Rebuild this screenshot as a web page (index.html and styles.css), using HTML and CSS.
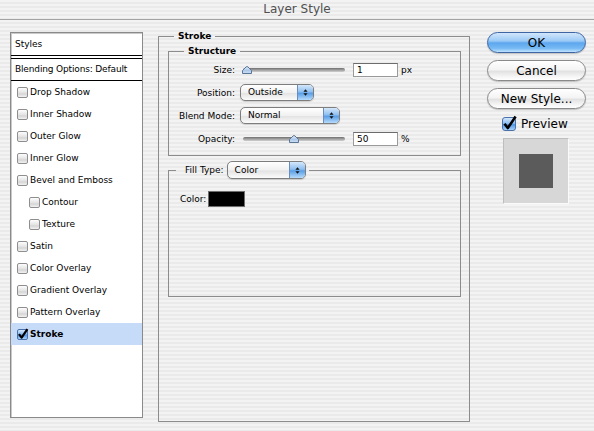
FILE: index.html
```html
<!DOCTYPE html>
<html lang="en">
<head>
<meta charset="utf-8">
<title>Layer Style</title>
<link rel="stylesheet" href="styles.css">
</head>
<body>
<div class="window">
  <header class="titlebar">Layer Style</header>

  <div class="content">
    <!-- Effect list -->
    <nav class="styles-list">
      <div class="list-head">Styles</div>
      <div class="list-sep"></div>
      <div class="list-blend">Blending Options: Default</div>
      <ul class="effects">
        <li class="effect"><span class="check"></span>Drop Shadow</li>
        <li class="effect"><span class="check"></span>Inner Shadow</li>
        <li class="effect"><span class="check"></span>Outer Glow</li>
        <li class="effect"><span class="check"></span>Inner Glow</li>
        <li class="effect"><span class="check"></span>Bevel and Emboss</li>
        <li class="effect sub"><span class="check"></span>Contour</li>
        <li class="effect sub"><span class="check"></span>Texture</li>
        <li class="effect"><span class="check"></span>Satin</li>
        <li class="effect"><span class="check"></span>Color Overlay</li>
        <li class="effect"><span class="check"></span>Gradient Overlay</li>
        <li class="effect"><span class="check"></span>Pattern Overlay</li>
        <li class="effect selected"><span class="check on"><svg viewBox="0 0 11 11"><path d="M2 5.2 L4.6 8.6 L10.4 0.2" fill="none" stroke="#000" stroke-width="2.2" stroke-linejoin="round"/></svg></span><b>Stroke</b></li>
      </ul>
    </nav>

    <!-- Stroke settings -->
    <fieldset class="group main-group">
      <legend>Stroke</legend>

      <fieldset class="group structure">
        <legend>Structure</legend>
        <div class="form-grid">
          <label>Size:</label>
          <div class="control">
            <div class="slider" style="--value:0"><div class="track"></div><span class="thumb"><svg viewBox="0 0 10 8"><path d="M0.5 7.5 V4.5 L4 1 Q5 0 6 1 L9.5 4.5 V7.5 Z" fill="url(#thumbFill)" stroke="#5b7597" stroke-width="1"/></svg></span></div>
            <span class="field">1</span><span class="unit">px</span>
          </div>

          <label>Position:</label>
          <div class="control">
            <div class="popup pos-popup"><span class="popup-text">Outside</span><span class="popup-arrows"><svg viewBox="0 0 6 10"><path d="M0.5 4 L3 1 L5.5 4 Z M0.5 6 L3 9 L5.5 6 Z" fill="#111"/></svg></span></div>
          </div>

          <label>Blend Mode:</label>
          <div class="control">
            <div class="popup blend-popup"><span class="popup-text">Normal</span><span class="popup-arrows"><svg viewBox="0 0 6 10"><path d="M0.5 4 L3 1 L5.5 4 Z M0.5 6 L3 9 L5.5 6 Z" fill="#111"/></svg></span></div>
          </div>

          <label>Opacity:</label>
          <div class="control">
            <div class="slider" style="--value:50"><div class="track"></div><span class="thumb"><svg viewBox="0 0 10 8"><path d="M0.5 7.5 V4.5 L4 1 Q5 0 6 1 L9.5 4.5 V7.5 Z" fill="url(#thumbFill)" stroke="#5b7597" stroke-width="1"/></svg></span></div>
            <span class="field">50</span><span class="unit">%</span>
          </div>
        </div>
      </fieldset>

      <fieldset class="group fill">
        <legend class="fill-legend"><span>Fill Type:</span><span class="popup fill-popup"><span class="popup-text">Color</span><span class="popup-arrows"><svg viewBox="0 0 6 10"><path d="M0.5 4 L3 1 L5.5 4 Z M0.5 6 L3 9 L5.5 6 Z" fill="#111"/></svg></span></span></legend>
        <div class="color-row"><span>Color:</span><span class="swatch"></span></div>
      </fieldset>
    </fieldset>

    <!-- Dialog buttons and preview -->
    <aside class="actions">
      <button class="btn default">OK</button>
      <button class="btn">Cancel</button>
      <button class="btn">New Style...</button>
      <div class="preview-toggle"><span class="check big on"><svg viewBox="0 0 14 14"><path d="M2.5 6.8 L5.8 11 L13.6 -0.5" fill="none" stroke="#000" stroke-width="2.6" stroke-linejoin="round"/></svg></span>Preview</div>
      <div class="preview-box"><div class="preview-swatch"></div></div>
    </aside>
  </div>
</div>

<svg class="defs" width="0" height="0" aria-hidden="true">
  <defs>
    <linearGradient id="thumbFill" x1="0" y1="0" x2="0" y2="1">
      <stop offset="0" stop-color="#e8f1fb"/>
      <stop offset="0.55" stop-color="#a9c6e8"/>
      <stop offset="1" stop-color="#cfe1f5"/>
    </linearGradient>
  </defs>
</svg>
</body>
</html>
```

FILE: styles.css
```css
* {
  box-sizing: border-box;
}

html,
body {
  margin: 0;
  padding: 0;
}

body {
  width: 594px;
  height: 431px;
  overflow: hidden;
  font-family: "DejaVu Sans", "Liberation Sans", sans-serif;
  font-size: 9px;
  color: #000;
  background: repeating-linear-gradient(to bottom, #f3f3f3 0 2px, #eaeaea 2px 4px);
}

.defs {
  position: absolute;
}

/* Window title */
.titlebar {
  height: 20px;
  border-bottom: 1px solid #a3a3a3;
  text-align: center;
  font-size: 12px;
  line-height: 18px;
  color: #505050;
}

.content {
  display: flex;
  align-items: flex-start;
  padding-left: 10px;
}

/* Effect list */
.styles-list {
  width: 133px;
  height: 386px;
  margin-top: 12px;
  background: #fff;
  border: 1px solid #8a8a8a;
  box-shadow: inset 1px 1px 0 #c9c9c9;
}

.list-head {
  height: 22px;
  line-height: 22px;
  padding-left: 4px;
}

.list-sep {
  height: 4px;
  border-top: 1px solid #000;
  border-bottom: 1px solid #000;
}

.list-blend {
  height: 22px;
  line-height: 21px;
  padding-left: 4px;
  border-bottom: 1px solid #000;
  letter-spacing: -0.15px;
}

.effects {
  list-style: none;
  margin: 0;
  padding: 0;
}

.effect {
  height: 22px;
  display: flex;
  align-items: center;
  gap: 2px;
  padding-left: 6px;
}

.effect.sub {
  padding-left: 18px;
}

.effect.selected {
  background: #c6dbf8;
}

.effect b {
  font-weight: bold;
}

/* Aqua checkbox */
.check {
  flex: none;
  width: 11px;
  height: 11px;
  border: 1px solid #8e8e8e;
  border-radius: 2px;
  background: linear-gradient(to bottom, #fdfdfd, #e2e2e2 55%, #d4d4d4 65%, #f2f2f2);
  position: relative;
}

.check.on {
  border-color: #4a72a8;
  background: linear-gradient(to bottom, #d3e6fb, #8dbdf0 45%, #4f96e2 55%, #a9d2fa);
}

.check svg {
  position: absolute;
  left: -1px;
  top: -1px;
  width: 11px;
  height: 11px;
  overflow: visible;
}

.check.big {
  width: 14px;
  height: 14px;
  border-radius: 3px;
}

.check.big svg {
  width: 14px;
  height: 14px;
}

/* Group boxes */
.group {
  margin: 0;
  border: 1px solid #8c8c8c;
  min-width: 0;
}

.group > legend {
  font-weight: bold;
  line-height: 12px;
  padding: 0 4px;
}

.main-group {
  width: 312px;
  margin-left: 15px;
  margin-top: 10px;
  padding: 3px 8px 124px 9px;
}

.main-group > legend {
  margin-left: 6px;
}

.structure {
  width: 293px;
  padding: 1px 0 5px 0;
}

.structure > legend {
  margin-left: 15px;
}

.form-grid {
  display: grid;
  grid-template-columns: 66px auto;
  column-gap: 5px;
  grid-auto-rows: 23px;
  align-items: center;
}

.form-grid label {
  text-align: right;
  white-space: nowrap;
}

.control {
  display: flex;
  align-items: center;
}

/* Slider */
.slider {
  position: relative;
  width: 108px;
  height: 12px;
  display: flex;
  align-items: center;
}

.track {
  flex: 1;
  margin: 0 3px;
  height: 4px;
  border-radius: 2px;
  background: linear-gradient(to bottom, #6f6f6f, #a9a9a9 60%, #d0d0d0);
}

.thumb {
  position: absolute;
  top: 2px;
  left: calc(2px + var(--value) * 0.94px);
  width: 10px;
  height: 8px;
}

.thumb svg {
  display: block;
  width: 10px;
  height: 8px;
}

.field {
  width: 45px;
  height: 14px;
  margin-left: 5px;
  padding-left: 3px;
  line-height: 13px;
  background: #fff;
  border: 1px solid #9a9a9a;
  border-top-color: #6c6c6c;
}

.unit {
  margin-left: 3px;
}

/* Popup menu */
.popup {
  display: flex;
  align-items: stretch;
  height: 17px;
  border: 1px solid #7d7d7d;
  border-radius: 5px;
  background: linear-gradient(to bottom, #ffffff, #f1f1f1 50%, #e3e3e3 55%, #fbfbfb);
  box-shadow: 0 1px 1px rgba(0, 0, 0, 0.15);
  overflow: hidden;
}

.popup-text {
  flex: 1;
  padding-left: 7px;
  line-height: 15px;
}

.popup-arrows {
  width: 16px;
  display: flex;
  align-items: center;
  justify-content: center;
  border-left: 1px solid #6a8cbf;
  background: linear-gradient(to bottom, #d5e7fb, #8fc0f0 45%, #5a9ee6 55%, #b6dbfb);
}

.popup-arrows svg {
  width: 5px;
  height: 9px;
}

.pos-popup {
  width: 74px;
}

.blend-popup {
  width: 100px;
}

.fill {
  width: 293px;
  margin-top: 5px;
  padding: 0 0 89px 0;
}

.group > .fill-legend {
  display: flex;
  align-items: center;
  gap: 3px;
  font-weight: normal;
  line-height: 18px;
  margin-left: 7px;
  padding: 0 3px 0 9px;
}

.fill-popup {
  width: 79px;
  height: 18px;
}

.fill-popup .popup-text {
  line-height: 16px;
}

.color-row {
  display: flex;
  align-items: center;
  gap: 2px;
  height: 16px;
  margin: 12px 0 0 11px;
}

.swatch {
  width: 37px;
  height: 16px;
  background: #000;
  border: 1px solid #6d6d6d;
}

/* Buttons */
.actions {
  width: 99px;
  margin: 12px 0 0 17px;
  display: flex;
  flex-direction: column;
}

.btn {
  height: 21px;
  margin: 0 0 7px 0;
  padding: 0;
  font-family: inherit;
  font-size: 12px;
  color: #000;
  border: 1px solid #8a8a8a;
  border-radius: 11px;
  background: linear-gradient(to bottom, #ffffff, #f4f4f4 45%, #e2e2e2 55%, #f7f7f7 85%, #ffffff);
  box-shadow: 0 1px 1px rgba(0, 0, 0, 0.2);
}

.btn.default {
  border-color: #3d66a3;
  background: linear-gradient(to bottom, #d2e6fc, #9bcaf6 42%, #5da7ee 52%, #76b9f4 80%, #bfe2ff);
}

.preview-toggle {
  display: flex;
  align-items: center;
  gap: 5px;
  height: 17px;
  margin-top: -1px;
  padding-left: 15px;
  font-size: 12px;
}

.preview-box {
  width: 66px;
  height: 66px;
  margin: 6px 0 0 16px;
  display: flex;
  align-items: center;
  justify-content: center;
  background: #d7d7d7;
  border: 1px solid #bdbdbd;
  border-right-color: #fafafa;
  border-bottom-color: #fafafa;
}

.preview-swatch {
  width: 34px;
  height: 34px;
  background: #5b5b5b;
}
```
